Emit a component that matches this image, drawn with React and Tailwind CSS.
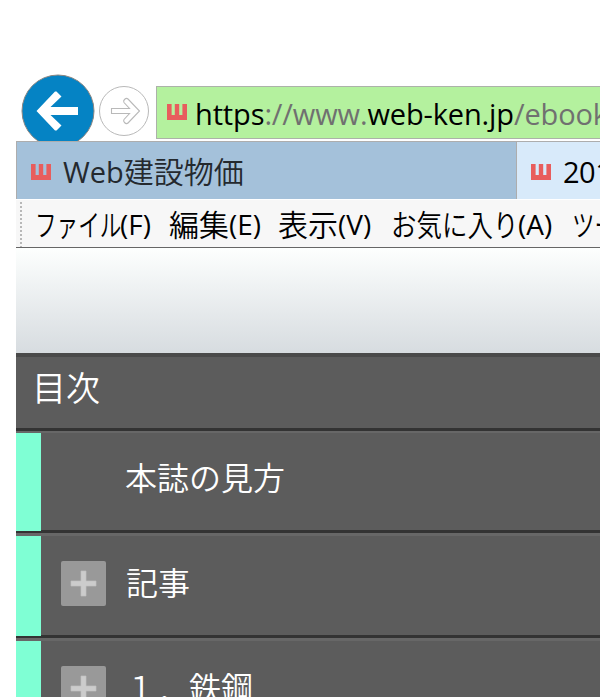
const latin = "font-['Open_Sans','Noto_Sans_CJK_JP',sans-serif]";
const cjk = "font-['Noto_Sans_CJK_JP',sans-serif]";

function SiteIcon() {
  return (
    <svg className="block h-4 w-5 shrink-0" viewBox="0 0 20 16" fill="#e85d5d">
      <path d="M0 0h4.6v11h3.2V0h4.4v11h3.2V0H20v16H0z" />
    </svg>
  );
}

function NavButtons() {
  return (
    <svg className="block h-[141px] w-[156px] shrink-0" viewBox="0 0 156 141">
      <circle cx="58" cy="111" r="36" fill="#0583c4" stroke="#8b8682" strokeWidth="1" />
      <path
        d="M36.5 111L55 91.5L56.5 91.5L61.5 96.5L50.5 107H78V115H50.5L61.5 125.5L56.5 130.5L55 130.5Z"
        fill="#fff"
      />
      <circle cx="124" cy="111" r="24.5" fill="#fff" stroke="#b9b9b9" strokeWidth="1" />
      <path
        d="M111.5 108.5H129.5L124 102.5Q123 101 124.5 99.5Q126.5 97.5 128 99L139.5 111L128 123Q126.5 124.500 124.5 122.5Q123 121 124 119.5L129.500 113.5H111.5Z"
        fill="#fff"
        stroke="#b9b9b9"
        strokeWidth="1.1"
      />
    </svg>
  );
}

function Menu({ label, mnemonic, width, labelWidth, labelScale }) {
  return (
    <span className={`flex shrink-0 ${width}`}>
      <span className={`shrink-0 ${labelWidth}`}>
        <span className={`inline-block origin-left text-[30px] ${labelScale}`}>{label}</span>
      </span>
      <span className="text-[28px] leading-[49px] font-normal font-['Open_Sans',sans-serif]">{mnemonic}</span>
    </span>
  );
}

function Plus() {
  return (
    <svg className="block h-[45px] w-[45px]" viewBox="0 0 45 45">
      <rect width="45" height="45" rx="2" fill="#999" />
      <path d="M20 10h5v10h10v5H25v10h-5V25H10v-5h10z" fill="#ccc" stroke="#c0c0c0" strokeWidth=".7" />
    </svg>
  );
}

function Row({ height, bar, plus, children }) {
  return (
    <div className="shrink-0">
      <div className={`flex ${height}`}>
        <div className={`relative w-[25px] shrink-0 bg-[#7fffd4] ${bar}`} />
        <div className="w-5 shrink-0" />
        <div className="flex w-[64px] shrink-0 items-start pt-[25px]">{plus && <Plus />}</div>
        {children}
      </div>
      <div className="h-[3px] bg-[#333]" />
      <div className="h-[3px] bg-[#676767]" />
    </div>
  );
}

export default function App() {
  return (
    <div className="flex h-[697px] w-[600px] flex-col overflow-hidden bg-white">
      <header className="flex h-[141px] shrink-0">
        <NavButtons />
        <div className={`mt-[86px] flex h-[53px] w-[460px] shrink-0 items-start border border-[#acb2a9] bg-[#b4f19e] pl-[10px] text-[29px] whitespace-nowrap text-black ${latin}`}>
          <div className="mt-[17px]"><SiteIcon /></div>
          <span className="ml-[8px] leading-[54px] tracking-[-0.13px]">
            https<span className="text-[#707070]">://www.</span>web-ken.jp<span className="text-[#707070]">/ebook</span>
          </span>
        </div>
      </header>

      <div className="ml-4 flex h-[58px] w-[620px] shrink-0 whitespace-nowrap">
        <div className="flex w-[501px] shrink-0 border-t border-r border-l border-[#adadad] bg-[#a4c1da] pl-[14px] text-[#24292e]">
          <div className="mt-[22px]"><SiteIcon /></div>
          <span className={`ml-[12px] text-[29px] leading-[60px] ${latin}`}>Web</span>
          <span className={`text-[30px] leading-[56px] font-[350] ${cjk}`}>建設物価</span>
        </div>
        <div className={`flex grow border-t border-[#adadad] bg-[#d8eafa] pl-[14px] text-[29px] leading-[60px] ${latin}`}>
          <div className="mt-[22px]"><SiteIcon /></div>
          <span className="ml-[12px] tracking-[-0.5px]">2017</span>
        </div>
      </div>

      <nav className={`ml-4 flex h-[49px] w-[600px] shrink-0 border-t border-b border-t-white border-b-[#666] bg-[#f7f7f7] leading-[46px] font-[350] whitespace-nowrap text-black ${cjk}`}>
        <div className="ml-[4px] w-[2px] shrink-0 bg-[repeating-linear-gradient(to_bottom,transparent_0_2px,#b8b8b8_2px_4px)]" />
        <div className="w-[13px] shrink-0" />
        <Menu label="ファイル" mnemonic="(F)" width="w-[134px]" labelWidth="w-[85px]" labelScale="scale-x-[.72]" />
        <Menu label="編集" mnemonic="(E)" width="w-[109px]" labelWidth="w-[60px]" labelScale="" />
        <Menu label="表示" mnemonic="(V)" width="w-[113px]" labelWidth="w-[60px]" labelScale="" />
        <Menu label="お気に入り" mnemonic="(A)" width="w-[181px]" labelWidth="w-[127px]" labelScale="scale-x-[.85]" />
        <Menu label="ツール" mnemonic="(T)" width="w-[134px]" labelWidth="w-[66px]" labelScale="scale-x-[.75]" />
      </nav>

      <main className={`ml-4 flex grow flex-col bg-[#5c5c5c] whitespace-nowrap text-white ${cjk}`}>
        <div className="h-[105px] shrink-0 bg-linear-to-b from-[#fdfffe] to-[#d7dce0]" />
        <div className="h-[4px] shrink-0 bg-[#4a4a4a]" />
        <h1 className="h-[71px] shrink-0 pl-[16px] text-[34px] leading-[60px] font-[350]">目次</h1>
        <div className="h-[3px] shrink-0 bg-[#333]" />
        <div className="h-[2px] shrink-0 bg-[#676767]" />
        <Row height="h-[97px]" bar="h-[98px]">
          <span className="text-[32px] leading-[86px] font-[350]">本誌の見方</span>
        </Row>
        <Row height="h-[99px]" bar="h-[100px]" plus>
          <span className="pl-px text-[32px] leading-[90px] font-[350]">記事</span>
        </Row>
        <Row height="h-[99px]" bar="h-[100px]" plus>
          <span className="text-[32px] leading-[90px] font-[350]">１．鉄鋼</span>
        </Row>
      </main>
    </div>
  );
}
